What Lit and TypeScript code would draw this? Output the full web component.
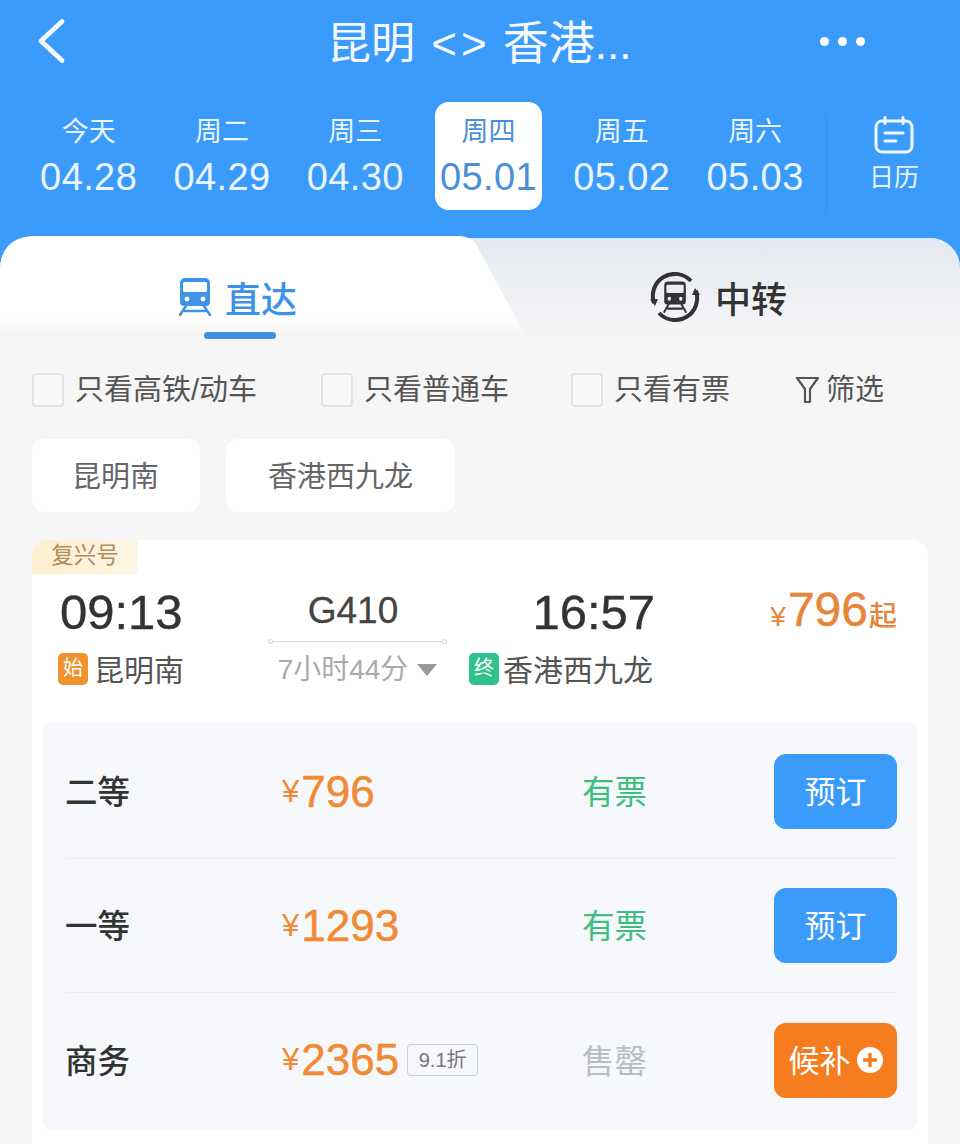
import { LitElement, html, css, svg } from "lit";
import { customElement } from "lit/decorators.js";

const DAYS = [
  ["今天", "04.28"],
  ["周二", "04.29"],
  ["周三", "04.30"],
  ["周四", "05.01"],
  ["周五", "05.02"],
  ["周六", "05.03"],
];

const trainGlyph = (body: string, cut: string) => svg`
  <path fill=${body} d="M7 0h20a5 5 0 0 1 5 5v19a4 4 0 0 1-4 4H6a4 4 0 0 1-4-4V5a5 5 0 0 1 5-5z"/>
  <rect x="5" y="4" width="24" height="10" rx="1.5" fill=${cut}/>
  <circle cx="9" cy="21" r="2.4" fill=${cut}/>
  <circle cx="25" cy="21" r="2.4" fill=${cut}/>
  <path fill="none" stroke=${body} stroke-width="2.6" stroke-linecap="round" d="M8 28 2 37M26 28l6 9M7 33h20"/>
`;

@customElement("app-root")
export class AppRoot extends LitElement {
  static styles = css`
    :host {
      display: block;
      width: 960px;
      height: 1144px;
      overflow: hidden;
      background: #f6f6f7;
      font-family: "Liberation Sans", "Noto Sans CJK SC", sans-serif;
      color: #333;
    }
    .header {
      background: #3b9bfb;
      height: 236px;
      color: #fff;
    }
    .title-row {
      height: 82px;
      display: grid;
      grid-template-columns: 327px 473px 1fr;
      grid-template-rows: 82px;
      align-items: center;
    }
    .back {
      width: 32px;
      height: 48px;
      margin-left: 35px;
      display: block;
    }
    .title {
      font-size: 44px;
      line-height: 78px;
      padding-top: 4px;
      white-space: nowrap;
      color: #f4f9ff;
    }
    .title .sep {
      margin-left: 4px;
      letter-spacing: 4px;
    }
    .title .to {
      font-size: 46px;
    }
    .dots {
      display: flex;
      gap: 9px;
      margin-left: 20px;
    }
    .dots i {
      width: 9px;
      height: 9px;
      border-radius: 50%;
      background: #fff;
    }
    .date-row {
      margin-top: 20px;
      padding-left: 22px;
      display: flex;
      height: 108px;
    }
    .days {
      display: grid;
      grid-template-columns: repeat(6, 133.3px);
      width: 800px;
    }
    .day {
      width: 107px;
      justify-self: center;
      height: 108px;
      border-radius: 14px;
      display: flex;
      flex-direction: column;
      align-items: center;
      color: #e9f4ff;
    }
    .day.on {
      background: #fff;
      color: #4a90d9;
    }
    .day .wk {
      font-size: 27px;
      line-height: 30px;
      margin-top: 15px;
    }
    .day .dt {
      font-size: 38px;
      line-height: 42px;
      margin-top: 9px;
      letter-spacing: 0.4px;
    }
    .cal {
      flex: 1;
      margin-left: 3px;
      border-left: 3px solid #3896f4;
      height: 100px;
      margin-top: 12px;
      display: flex;
      flex-direction: column;
      align-items: center;
      box-sizing: border-box;
      color: #e9f4ff;
    }
    .cal svg {
      display: block;
      margin-top: 2px;
    }
    .cal span {
      font-size: 25px;
      line-height: 30px;
      margin-top: 8px;
    }
    .tabs-inner {
      padding-top: 2px;
      background: #3b9bfb;
      height: 104px;
      box-sizing: border-box;
      display: flex;
    }
    .tabs-bg {
      display: flex;
      width: 100%;
      height: 102px;
      border-radius: 30px 30px 0 0;
      background: linear-gradient(#e6eaf0, #eef0f4 55%, #f6f6f7);
      box-shadow: inset 0 2px 0 #d9ecfd;
    }
    .tab-left {
      width: 528px;
      height: 104px;
      margin-top: -2px;
      padding: 36px 0 0 178px;
      box-sizing: border-box;
      background: linear-gradient(#fff 76%, #f6f6f7 94%);
      clip-path: path("M0 36Q0 0 36 0L458 0Q474 0 479 14L528 104L0 104Z");
    }
    .tab-line {
      display: flex;
      align-items: center;
      height: 50px;
      font-size: 36px;
      font-weight: 500;
    }
    .tab-left .tab-line {
      color: #3b92e8;
      gap: 13px;
    }
    .underline {
      width: 72px;
      height: 7px;
      border-radius: 4px;
      background: #3f8fe6;
      margin: 10px 0 0 26px;
    }
    .tab-right {
      flex: 1;
      padding: 34px 0 0 122px;
      box-sizing: border-box;
    }
    .tab-right .tab-line {
      gap: 15px;
      color: #333;
    }
    .filters {
      margin-top: 33px;
      padding-left: 32px;
      height: 34px;
      display: flex;
      align-items: center;
      font-size: 29px;
      color: #555;
    }
    .filters span {
      padding-bottom: 6px;
      white-space: nowrap;
    }
    .check {
      display: flex;
      align-items: center;
      gap: 11px;
      margin-right: 62px;
    }
    .check.first {
      margin-right: 64px;
    }
    .check.last {
      margin-right: 65px;
    }
    .check i {
      width: 32px;
      height: 34px;
      box-sizing: border-box;
      border: 2px solid #e2e3e5;
      border-radius: 4px;
      background: #f8f8f8;
    }
    .filter {
      display: flex;
      align-items: center;
      gap: 6px;
    }
    .chips {
      margin-top: 32px;
      padding-left: 32px;
      display: flex;
      gap: 26px;
    }
    .chip {
      height: 69px;
      padding: 4px 42px 0;
      line-height: 69px;
      background: #fff;
      border-radius: 12px;
      font-size: 29px;
      color: #666;
    }
    .chip.a {
      padding: 4px 41px 0 40px;
    }
    .card {
      margin: 28px 32px 0;
      background: #fff;
      border-radius: 16px;
      padding-bottom: 40px;
      overflow: hidden;
    }
    .tag {
      width: 106px;
      height: 34px;
      line-height: 32px;
      text-align: center;
      font-size: 22.5px;
      color: #b08d57;
      background: linear-gradient(90deg, #fdeecf, #fdf6e6);
      border-bottom-right-radius: 4px;
    }
    .trip {
      display: grid;
      grid-template-columns: 208px 179px 22px 186px 1fr;
      padding: 10px 31px 0 28px;
      height: 104px;
    }
    .time {
      font-size: 49px;
      -webkit-text-stroke: 0.4px #333;
      line-height: 56px;
      height: 67px;
      color: #333;
    }
    .time.end {
      text-align: right;
    }
    .station {
      display: flex;
      align-items: center;
      height: 36px;
      font-size: 30px;
      color: #555;
      white-space: nowrap;
    }
    .station span {
      padding-bottom: 2px;
    }
    .station b {
      width: 30px;
      height: 32px;
      line-height: 30px;
      border-radius: 5px;
      font-size: 20px;
      font-weight: 400;
      color: #fff;
      text-align: center;
      margin: 0 6px 0 -2px;
      background: #f0922e;
    }
    .station b.g {
      background: #2fc28a;
      margin: 0 4px 0 0;
    }
    .mid {
      text-align: center;
    }
    .code {
      font-size: 37px;
      -webkit-text-stroke: 0.3px #444;
      line-height: 54px;
      padding-right: 9px;
      color: #444;
    }
    .rule {
      height: 1px;
      background: #dcdcdc;
      margin-top: 3px;
      position: relative;
    }
    .rule::before,
    .rule::after {
      content: "";
      position: absolute;
      top: -2px;
      width: 5px;
      height: 5px;
      box-sizing: border-box;
      border: 1px solid #d5d5d5;
      border-radius: 50%;
      background: #fff;
    }
    .rule::before {
      left: 0;
    }
    .rule::after {
      right: 0;
    }
    .dur {
      margin-top: 10px;
      height: 36px;
      line-height: 36px;
      font-size: 28px;
      color: #aaa;
      white-space: nowrap;
      display: flex;
      align-items: center;
      justify-content: center;
      gap: 9px;
    }
    .dur i {
      width: 0;
      height: 0;
      border-left: 10px solid transparent;
      border-right: 10px solid transparent;
      border-top: 12px solid #999;
    }
    .lead {
      text-align: right;
      color: #e8853a;
      white-space: nowrap;
      line-height: 52px;
      font-size: 28px;
      font-weight: 500;
    }
    .lead span {
      font-size: 48px;
      font-weight: 400;
      -webkit-text-stroke: 0.5px #e8853a;
      margin-left: 2px;
    }
    .lead em {
      font-style: normal;
      margin-left: 1px;
    }
    .panel {
      margin: 34px 10px 0;
      background: #f6f8fb;
      border-radius: 12px;
      padding: 3px 21px 4px 23px;
    }
    .row {
      height: 134px;
      box-sizing: border-box;
      display: grid;
      grid-template-columns: 217px 300px 1fr 123px;
      align-items: center;
      border-bottom: 1px solid #eceef2;
    }
    .row:last-child {
      border-bottom: 0;
    }
    .cls {
      font-size: 32.5px;
      color: #333;
      font-weight: 500;
      padding-bottom: 4px;
    }
    .price {
      display: flex;
      align-items: center;
      color: #f08a35;
      font-size: 31px;
      white-space: nowrap;
    }
    .price strong {
      font-size: 44px;
      font-weight: 400;
      -webkit-text-stroke: 0.5px #f08a35;
      margin-left: 2px;
    }
    .off {
      margin-left: 8px;
      width: 71px;
      height: 32px;
      box-sizing: border-box;
      line-height: 30px;
      border: 1px solid #ccd0d6;
      border-radius: 4px;
      font-size: 20px;
      color: #777;
      text-align: center;
    }
    .status {
      font-size: 32.5px;
      color: #3fbf7f;
      padding-bottom: 4px;
    }
    .status.none {
      color: #b8bcc4;
    }
    .btn {
      height: 71px;
      padding-bottom: 4px;
      border-radius: 12px;
      background: #3b9bfb;
      color: #fff;
      font-size: 31px;
      display: flex;
      align-items: center;
      justify-content: center;
      gap: 6px;
    }
    .btn svg {
      margin-top: 4px;
    }
    .btn.wait {
      background: #f57c1f;
    }
  `;

  private row(cls: string, price: string, status: string, off = "") {
    const none = status === "售罄";
    return html`<div class="row">
      <div class="cls">${cls}</div>
      <div class="price">
        ¥<strong>${price}</strong>${off ? html`<span class="off">${off}</span>` : ""}
      </div>
      <div class="status ${none ? "none" : ""}">${status}</div>
      ${none
        ? html`<div class="btn wait">
            候补
            <svg width="26" height="26" viewBox="0 0 26 26">
              <circle cx="13" cy="13" r="13" fill="#fff" />
              <path d="M13 6v14M6 13h14" stroke="#f57c1f" stroke-width="3.4" />
            </svg>
          </div>`
        : html`<div class="btn">预订</div>`}
    </div>`;
  }

  render() {
    return html`
      <div class="header">
        <div class="title-row">
          <svg class="back" viewBox="0 0 32 48">
            <path d="M27 4.500 6 24l21 19.500" fill="none" stroke="#f4f9ff" stroke-width="4.800" stroke-linecap="round" stroke-linejoin="round" />
          </svg>
          <div class="title">昆明 <span class="sep">&lt;&gt;</span> <span class="to">香港</span>...</div>
          <div class="dots"><i></i><i></i><i></i></div>
        </div>
        <div class="date-row">
          <div class="days">
            ${DAYS.map(
              ([w, d], i) => html`<div class="day ${i === 3 ? "on" : ""}">
                <span class="wk">${w}</span><span class="dt">${d}</span>
              </div>`
            )}
          </div>
          <div class="cal">
            <svg width="40" height="38" viewBox="0 0 40 38" fill="none" stroke="#eef7ff" stroke-width="3" stroke-linecap="round">
              <rect x="2" y="5" width="36" height="31" rx="6" />
              <path d="M11 1.500v6M29 1.500v6M11 17h18M11 25h11" />
            </svg>
            <span>日历</span>
          </div>
        </div>
      </div>
      <div class="tabs-inner">
        <div class="tabs-bg">
          <div class="tab-left">
            <div class="tab-line">
              <svg width="34" height="38" viewBox="0 0 34 38">${trainGlyph("#3f94ea", "#fff")}</svg>
              直达
            </div>
            <div class="underline"></div>
          </div>
          <div class="tab-right">
            <div class="tab-line">
              <svg width="50" height="50" viewBox="0 0 50 50">
                <path d="M4 31A22 22 0 0 1 41 9M46 19A22 22 0 0 1 9 41" fill="none" stroke="#333" stroke-width="4" />
                <path d="M0 27l8 0-3 7zM50 23l-8 0 3-7z" fill="#333" />
                <g transform="translate(12.800 9.500) scale(.72 .82)">${trainGlyph("#333", "#e9ecf1")}</g>
              </svg>
              中转
            </div>
          </div>
        </div>
      </div>
      <div class="filters">
        <div class="check first"><i></i><span>只看高铁/动车</span></div>
        <div class="check"><i></i><span>只看普通车</span></div>
        <div class="check last"><i></i><span>只看有票</span></div>
        <div class="filter">
          <svg width="25" height="28" viewBox="0 0 25 28" fill="none" stroke="#555" stroke-width="2.2" stroke-linejoin="round">
            <path d="M2 2h21l-8 11v13h-5V13z" />
          </svg>
          <span>筛选</span>
        </div>
      </div>
      <div class="chips">
        <div class="chip a">昆明南</div>
        <div class="chip">香港西九龙</div>
      </div>
      <div class="card">
        <div class="tag">复兴号</div>
        <div class="trip">
          <div>
            <div class="time">09:13</div>
            <div class="station"><b>始</b><span>昆明南</span></div>
          </div>
          <div class="mid">
            <div class="code">G410</div>
            <div class="rule"></div>
            <div class="dur">7小时44分<i></i></div>
          </div>
          <div></div>
          <div>
            <div class="time end">16:57</div>
            <div class="station"><b class="g">终</b><span>香港西九龙</span></div>
          </div>
          <div class="lead">¥<span>796</span><em>起</em></div>
        </div>
        <div class="panel">
          ${this.row("二等", "796", "有票")}
          ${this.row("一等", "1293", "有票")}
          ${this.row("商务", "2365", "售罄", "9.1折")}
        </div>
      </div>
    `;
  }
}
